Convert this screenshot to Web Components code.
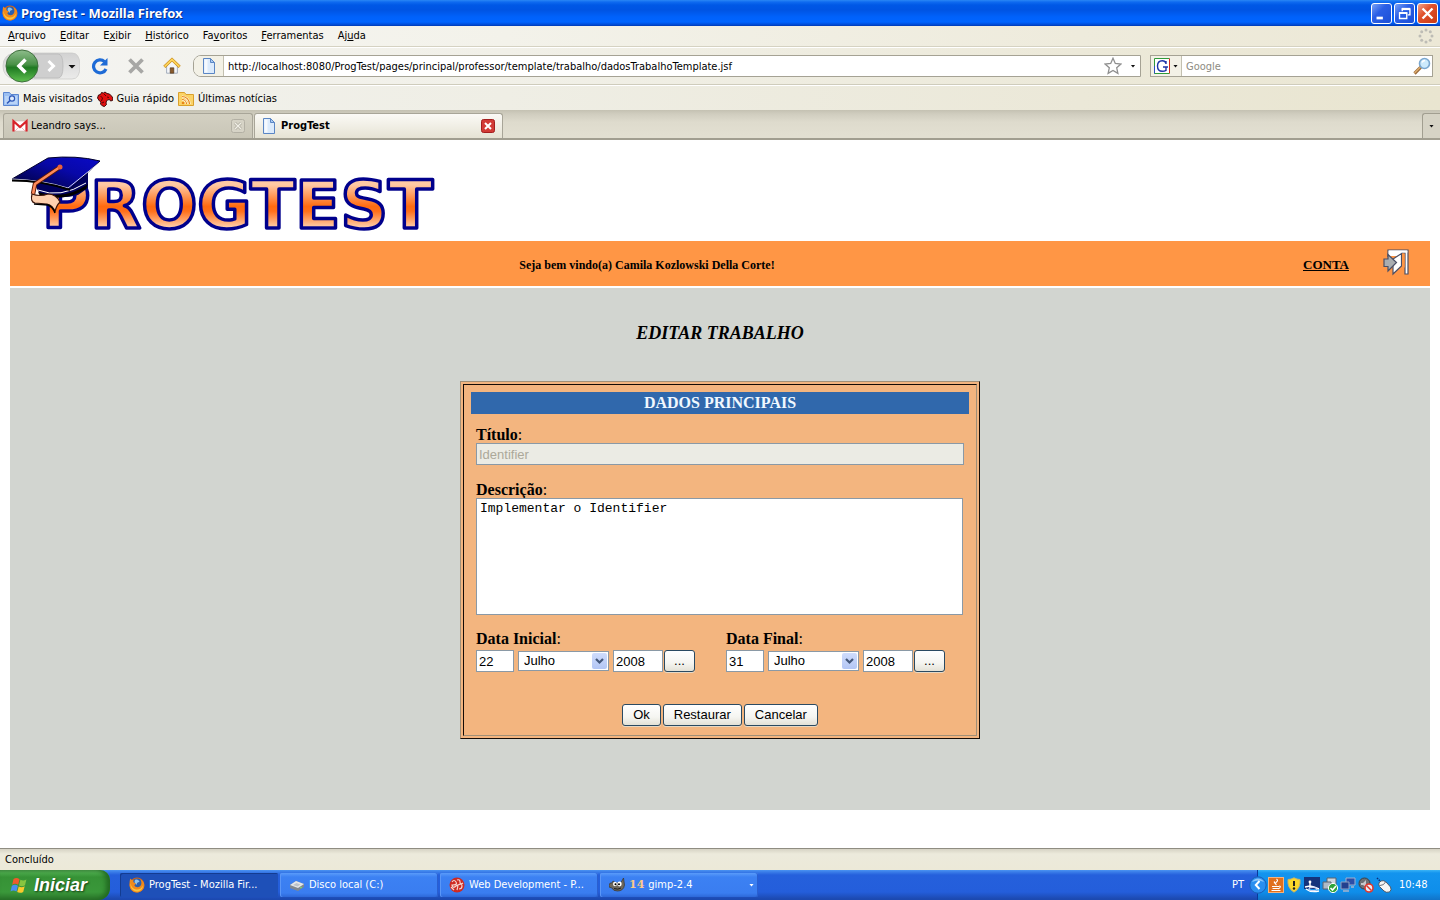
<!DOCTYPE html>
<html lang="pt-BR">
<head>
<meta charset="utf-8">
<title>ProgTest - Mozilla Firefox</title>
<style>
  html, body { margin: 0; height: 100%; }
  body {
    --ui: "DejaVu Sans Condensed", "DejaVu Sans", sans-serif;
    --sans: "Liberation Sans", Arial, sans-serif;
    --serif: "Liberation Serif", "Times New Roman", serif;
    --mono: "Liberation Mono", "Courier New", monospace;
    font: 11px/14px var(--ui);
    color: #000; background: #fff;
  }
</style>
</head>
<body>
<desktop-shell>
  <xp-titlebar>ProgTest - Mozilla Firefox</xp-titlebar>
  <ff-menubar></ff-menubar>
  <ff-navbar></ff-navbar>
  <ff-bookmarks></ff-bookmarks>
  <ff-tabstrip>
    <ff-tab icon="gmail">Leandro says...</ff-tab>
    <ff-tab icon="page" active>ProgTest</ff-tab>
  </ff-tabstrip>
  <pt-page slot="content">
    <pt-logo></pt-logo>
    <pt-welcome user="Camila Kozlowski Della Corte"></pt-welcome>
    <pt-main heading="EDITAR TRABALHO">
      <pt-workform></pt-workform>
    </pt-main>
  </pt-page>
  <ff-statusbar slot="footer">Concluído</ff-statusbar>
  <xp-taskbar slot="footer">
    <xp-task icon="firefox" active>ProgTest - Mozilla Fir...</xp-task>
    <xp-task icon="disk">Disco local (C:)</xp-task>
    <xp-task icon="web">Web Development - P...</xp-task>
    <xp-task icon="gimp" count="14">gimp-2.4</xp-task>
  </xp-taskbar>
</desktop-shell>

<script>
const define = (name, render) => customElements.define(name, class extends HTMLElement {
  connectedCallback() {
    if (this.shadowRoot) return;
    this.attachShadow({ mode: 'open' }).innerHTML =
      '<style>:host,*{box-sizing:border-box}button,input,select,textarea{font:inherit;color:inherit;margin:0}</style>' + render(this);
  }
});

/* ---------- icons ---------- */
const ICONS = {
  firefox: ['0 0 16 16', `<circle cx="8" cy="8" r="7.4" fill="#d9640f"/><circle cx="8.2" cy="6.4" r="5" fill="#2b5fae"/><path d="M6 3c2-1 4 0 4.500 2-2 0-3 1-2.500 2.500C6 7.500 5 5 6 3z" fill="#8cc4ef"/><path d="M1.200 1.500C2 2.600 3 3 4.500 3.200 4 5 4.600 6 7 6.200c0 1-1.500 1-1.600 2 .5 2 3.600 2.600 5.400 1.200C13 8 12.800 4.500 11 2c3 1.200 4.600 4 4.300 7-.5 4-4 6.500-7.600 6.500C3 15.300.2 11 .5 7 .6 5 .8 3 1.200 1.500z" fill="#f08a1c"/><path d="M1.500 6c.5 3 2 6 6 6.500 3 .2 5.500-1.500 6.300-4 .3 3.500-2.500 6-6 6C4 14.400 1 11 1.500 6z" fill="#f9c440"/>`],
  gmail: ['0 0 16 16', `<path d="M1 3h14v10H1z" fill="#fff" stroke="#d8b0b0" stroke-width=".6"/><path d="M1.500 13.500V3.200L8 9l6.500-5.800v10.300" fill="none" stroke="#d8232a" stroke-width="2.200"/><path d="M3 13l4-4M13 13L9 9" stroke="#e6a7a7" stroke-width=".8"/>`],
  page: ['0 0 16 16', `<path d="M2.500.5h7l4 4v11h-11z" fill="#dcebfc" stroke="#5b86c4"/><path d="M3.500 1.500h3v13h-3z" fill="#fff" opacity=".7"/><path d="M9.500.5v4h4z" fill="#a9cbf3" stroke="#5b86c4"/>`],
  closeTab: ['0 0 14 14', `<rect x=".5" y=".5" width="13" height="13" rx="2" fill="#d23b36" stroke="#a31f1f"/><path d="M4 4l6 6M10 4l-6 6" stroke="#fff" stroke-width="2"/>`],
  closeTabOff: ['0 0 14 14', `<rect x=".5" y=".5" width="13" height="13" rx="2" fill="#d6d3c6" stroke="#b3b0a4"/><path d="M4 4l6 6M10 4l-6 6" stroke="#aaa79b" stroke-width="2.600"/><path d="M4 4l6 6M10 4l-6 6" stroke="#f1efe6" stroke-width="1.400"/>`],
  min: ['0 0 21 21', `<rect x="5" y="14" width="7" height="3" fill="#fff"/>`],
  restore: ['0 0 21 21', `<path d="M8 8V5.500h8.500V12H14" fill="none" stroke="#fff" stroke-width="1.500"/><path d="M7.500 5.500h9" stroke="#fff" stroke-width="2.500"/><path d="M5 10h8v6H5z" fill="none" stroke="#fff" stroke-width="1.500"/><path d="M4.500 10h9" stroke="#fff" stroke-width="2"/>`],
  close: ['0 0 21 21', `<path d="M5 5l11 11M16 5L5 16" stroke="#fff" stroke-width="2.600"/>`],
  throbber: ['0 0 16 16', `<g fill="#bdbcb5"><circle cx="8" cy="2" r="1.500"/><circle cx="12.300" cy="3.700" r="1.500"/><circle cx="14" cy="8" r="1.500"/><circle cx="12.300" cy="12.300" r="1.500"/><circle cx="8" cy="14" r="1.500"/><circle cx="3.700" cy="12.300" r="1.500"/><circle cx="2" cy="8" r="1.500"/><circle cx="3.700" cy="3.700" r="1.500"/></g>`],
  navgroup: ['0 0 80 34', `<defs><linearGradient id="g" x2="0" y2="1"><stop stop-color="#8fbd8c"/><stop offset=".45" stop-color="#4a9148"/><stop offset=".55" stop-color="#1f7a22"/><stop offset="1" stop-color="#5fc04f"/></linearGradient><linearGradient id="h" x2="0" y2="1"><stop stop-color="#d2d2d2"/><stop offset="1" stop-color="#ebebea"/></linearGradient></defs><path d="M14 4h58q8 0 8 13t-8 13H14Q3 28 3 17T14 4z" fill="url(#h)" stroke="#c9c9c7" stroke-width=".7"/><path d="M34 5h24q5 0 5 12t-5 12H34z" fill="#cfcfcf" stroke="#b9b9b9" stroke-width=".8"/><circle cx="22" cy="17" r="16" fill="url(#g)" stroke="#3f6f3d"/><path d="M25.500 10.500L19 17l6.500 6.500" fill="none" stroke="#fff" stroke-width="3.600"/><path d="M48.500 12l5 5-5 5" fill="none" stroke="#fff" stroke-width="3"/><path d="M68.500 16h7l-3.500 3.500z" fill="#111"/>`],
  reload: ['0 0 18 18', `<path d="M13.500 4.600A6.500 6.500 0 1 0 15 12" fill="none" stroke="#1e6bd6" stroke-width="3.200"/><path d="M16.500 1v7.500H9z" fill="#1e6bd6"/>`],
  stop: ['0 0 18 18', `<path d="M2.500 2.500l13 13M15.500 2.500l-13 13" stroke="#a7a7a5" stroke-width="3.800"/>`],
  home: ['0 0 20 18', `<path d="M4 9l6-6 6 6v8H4z" fill="#f4f6fa" stroke="#8794a8" stroke-width=".8"/><path d="M8 11h4v6H8z" fill="#8a5a2c" stroke="#473016" stroke-width=".7"/><path d="M1.500 10L10 1.800 18.500 10" fill="none" stroke="#c98a18" stroke-width="3.400"/><path d="M1.800 9.700L10 1.900l8.200 7.800" fill="none" stroke="#fcd45c" stroke-width="2"/>`],
  star: ['0 0 18 18', `<path d="M9 1.200l2.300 5.200 5.600.6-4.200 3.800 1.200 5.600L9 13.500l-4.900 2.900 1.200-5.600L1.100 7l5.600-.6z" fill="#fff" stroke="#8f8f8f" stroke-width="1.300"/>`],
  google: ['0 0 16 16', `<path d="M.5.500h15v15H.5z" fill="#fff"/><path d="M.5 15.500V.5h15" fill="none" stroke="#2f9a3a"/><path d="M15.500.5v15" stroke="#d02a20"/><path d="M.5 15.500h15" stroke="#2f9a3a"/><path d="M.5 8v7.500" stroke="#2a4fc0"/><path d="M12 6V3M12 5.500C11.500 3.500 10 2.700 8.200 2.700 5.300 2.700 3.500 5 3.500 8s1.800 5.300 4.800 5.300c1.500 0 2.800-.4 3.700-1V9M9 9h5" fill="none" stroke="#1d34a8" stroke-width="1.400"/>`],
  lens: ['0 0 18 18', `<path d="M1.500 16.500l6.300-6.300" stroke="#9b6a3b" stroke-width="3.200"/><path d="M1.500 16l6-6" stroke="#e0b070" stroke-width="1.300"/><circle cx="11.500" cy="6.500" r="5" fill="#cdeafc" stroke="#7aa7cf" stroke-width="1.600"/><path d="M9 5.500q1-2 3-2" fill="none" stroke="#fff" stroke-width="1.500"/>`],
  folderFind: ['0 0 16 16', `<path d="M.5 1.500h6l1.500 2h7.500v11H.5z" fill="#9cc0f2" stroke="#5b86d0"/><path d="M2 5h12v8H2z" fill="#b9d4f8"/><circle cx="9" cy="7.500" r="2.600" fill="#e0ecfc" stroke="#2e58b8" stroke-width="1.200"/><path d="M7 9.500L4 12.500" stroke="#2e58b8" stroke-width="1.600"/>`],
  dino: ['0 0 16 16', `<path d="M.5 7l1-3 2-.5 1-2 2 .5 1.500-1 2 1.500 2.500.5 2 2 1.500 2-.5 2.500-2 .5-1-1.500-2 .5-1 1-.5 2 .5 1.500-2 2-2-.5-2-2 .5-2-1.500-1z" fill="#e01010" stroke="#2a0303" stroke-width=".9"/><path d="M3.500 5l2 2-1 3M7 3l2 2M10 6l2 .5M5 12l2-1" stroke="#5a0404" fill="none"/>`],
  rssFolder: ['0 0 16 16', `<path d="M.5 1.500h6l1.500 2h7.500v11H.5z" fill="#fbd367" stroke="#d9a02c"/><circle cx="5" cy="12" r="1.300" fill="#e8861a"/><path d="M4 8.500a4.500 4.500 0 0 1 4.500 4.500M4 5.500a7.500 7.500 0 0 1 7.500 7.500" fill="none" stroke="#fff" stroke-width="2.200"/><path d="M4 8.500a4.500 4.500 0 0 1 4.500 4.500M4 5.500a7.500 7.500 0 0 1 7.500 7.500" fill="none" stroke="#e8861a" stroke-width="1.200"/>`],
  door: ['0 0 28 28', `<path d="M5 9V2h20v24h-3V5h-4" fill="#fff" stroke="#4a4f66" stroke-width="1.200"/><path d="M5.600 2.600h18.800v2H19V8H5.600z" fill="#fff"/><path d="M18.500 5.500V18L10 26V11z" fill="#fff" stroke="#4a4f66" stroke-width="1.200"/><path d="M19.200 5.500h2.500v14h-2.500z" fill="#ff9645"/><path d="M1 11h4V6.500l8.500 8L5 23v-4.500H1z" fill="#a9adb0" stroke="#4a4f66" stroke-width="1.200"/>`],
  flag: ['0 0 20 18', `<path d="M4.500 2.500q3-2 6 .2L9.200 8.300q-3-2-6 0z" fill="#ef5a2c"/><path d="M11.400 3.300q3 1.600 6-.3L16 8.700q-3 1.800-6 .2z" fill="#87c540"/><path d="M2.900 9.300q3-2 6 0L7.500 15q-3-2-6-.1z" fill="#4a8ef0"/><path d="M9.700 9.900q3 1.700 6-.2l-1.500 5.700q-3 1.800-6 .2z" fill="#fbc92d"/>`],
  disk: ['0 0 16 16', `<path d="M1 8l6-4 8 3v3l-6 4-8-3z" fill="#7f8791"/><path d="M1 8l6-4 8 3-6 4z" fill="#e3e6ea"/><path d="M4 8l3.500-2 4 1.500-3 2z" fill="#bcc2ca"/><circle cx="12" cy="10.500" r=".8" fill="#6ff06a"/>`],
  web: ['0 0 16 16', `<circle cx="8" cy="8" r="7.500" fill="#cf2a22"/><path d="M3 5q2-3 4 0T3 8q1 4 4 1t1 4M8 3q3-1 3 2t3 1M9 8q4-2 4 1t-3 3M2 10l3 3" fill="none" stroke="#f5d5d0" stroke-width="1.200"/>`],
  gimp: ['0 0 16 16', `<path d="M0 8Q1 5 3 6l1-2 3 2 5-.5L14.500 1l1 7q-1 6-7 6Q4 14 3 11L0 10z" fill="#6d675c" stroke="#37342e" stroke-width=".7"/><ellipse cx="6" cy="7" rx="2" ry="2.200" fill="#fff"/><ellipse cx="10.500" cy="7" rx="2.200" ry="2.400" fill="#fff"/><circle cx="6.500" cy="7.300" r="1"/><circle cx="10" cy="7.300" r="1"/><path d="M5 11.500q4 1.500 7-.5" stroke="#201e1a" fill="none"/>`],
  java: ['0 0 16 16', `<rect x=".5" y=".5" width="15" height="15" fill="#e0701c" stroke="#f6b27c"/><path d="M8.500 2q2 1.500 0 3t0 3M6 4.500q1 1 .3 2" fill="none" stroke="#fff" stroke-width="1.100"/><path d="M4 9.500h7M4.500 11.500h6M11 9q2 0 1 1.500t-2 1M3.500 13.500h9" fill="none" stroke="#fff" stroke-width="1.100"/>`],
  shield: ['0 0 16 16', `<path d="M8 .8q3 1.700 6 1.700 1 8.500-6 12.700Q1 11 2 2.500 5 2.500 8 .8z" fill="#fbd82a" stroke="#c9b26a"/><path d="M8 4v5" stroke="#222" stroke-width="2"/><circle cx="8" cy="11.500" r="1.200" fill="#222"/>`],
  wifi: ['0 0 16 16', `<path d="M0 0h16v12H0z" fill="#14337c"/><circle cx="6" cy="5" r="1.400" fill="#fff"/><path d="M6 5v6M1 10l5-1 4 1 5 2M2 12q5 4 13 2" fill="none" stroke="#fff" stroke-width="1.400"/><ellipse cx="9" cy="12" rx="4" ry="1.600" fill="none" stroke="#c9d6f5" stroke-width="1.100"/>`],
  safe: ['0 0 16 16', `<path d="M5 1h9v7H5z" fill="#cfd6de" stroke="#59636e"/><path d="M1 5h8v7H1z" fill="#aebac6" stroke="#59636e"/><circle cx="11" cy="11" r="4.600" fill="#2fa43a" stroke="#fff"/><path d="M8.500 11l2 2 3.500-4" fill="none" stroke="#fff" stroke-width="1.600"/>`],
  net: ['0 0 16 16', `<path d="M6 1h9v7H6z" fill="#2c4ea8" stroke="#9fb0cf"/><path d="M1 5h8v7H1z" fill="#22408f" stroke="#8ea0c2"/><path d="M3 14h6M11 10h3" stroke="#a8b4cc" stroke-width="1.600"/>`],
  mute: ['0 0 16 16', `<circle cx="6.500" cy="6.500" r="5.500" fill="#6d7075" stroke="#3c3e42"/><path d="M3 6h2l3-3v7L5 8H3z" fill="#c5c8cc"/><circle cx="11" cy="11" r="4" fill="#e8edf5" stroke="#e0372c" stroke-width="1.600"/><path d="M8.500 8.500l5 5" stroke="#e0372c" stroke-width="1.500"/>`],
  mouse: ['0 0 16 16', `<path d="M1 1l4 4" stroke="#0b2c7a" stroke-width="1.500" stroke-dasharray="1.500 1"/><path d="M3.500 5q4-3 7.500 1l3.500 4q1.500 3-1 5-3.500 1-5.500-1L3.500 9.500Q2 7 3.500 5z" fill="#f6f6f4" stroke="#4c4f58" stroke-width=".9"/><path d="M4 8.500Q8 8.500 9.500 5" fill="none" stroke="#6c6f78"/>`],
  collapse: ['0 0 18 18', `<circle cx="9" cy="9" r="8.200" fill="#2a8ff0" stroke="#1a5fb8"/><path d="M3 6a7 7 0 0 1 12 0q-6-3-12 0z" fill="#8cc6fa"/><path d="M10.500 5L6.800 9l3.700 4" fill="none" stroke="#fff" stroke-width="2"/>`]
};
define('ui-icon', el => {
  const [box, body] = ICONS[el.getAttribute('name')];
  return `<style>:host{display:block;flex:none;width:16px;height:16px}svg{display:block;width:100%;height:100%}</style>
    <svg viewBox="${box}" aria-hidden="true">${body}</svg>`;
});

/* ---------- window shell ---------- */
define('desktop-shell', () => `
  <style>
    :host{display:flex;flex-direction:column;min-height:100vh}
    main{flex:1;min-height:0}
  </style>
  <slot></slot><main><slot name="content"></slot></main><slot name="footer"></slot>`);

define('xp-titlebar', () => `
  <style>
    :host{display:flex;align-items:center;height:26px;padding:0 2px;gap:2px;
      background:linear-gradient(#2a87f5 0,#0f6bf0 2px,#0058e6 5px,#0054e3 10px,#0062fb 17px,#0064ff 22px,#0048d0 25px,#0038b0);
      color:#fff}
    h1{flex:1;margin:0;padding-left:1px;font:700 13px/18px "Noto Sans","Open Sans",sans-serif;text-shadow:1px 1px #0a2f86}
    button{width:21px;height:21px;padding:0;border:1px solid #fff;border-radius:3px;
      background:linear-gradient(135deg,#7aa2f6,#2a5fe6 40%,#1c4fd6)}
    .close{background:linear-gradient(135deg,#f0a48c,#e0512c 40%,#c83a14)}
    ui-icon{width:19px;height:19px}
    .logo{width:16px;height:16px}
  </style>
  <ui-icon class="logo" name="firefox"></ui-icon>
  <h1><slot></slot></h1>
  <button aria-label="Minimizar"><ui-icon name="min"></ui-icon></button>
  <button aria-label="Restaurar"><ui-icon name="restore"></ui-icon></button>
  <button class="close" aria-label="Fechar"><ui-icon name="close"></ui-icon></button>`);

define('ff-menubar', () => `
  <style>
    :host{display:flex;align-items:center;height:21px;padding:0 6px 0 8px;
      background:linear-gradient(90deg,#f6f6f3,#f3f2ea 35%,#eeebdc 75%,#ece8d6);
      border-bottom:1px solid #d5d2c2}
    nav{flex:1;display:flex;gap:14px}
    a{color:#000;text-decoration:none}
  </style>
  <nav>
    <a href="#"><u>A</u>rquivo</a><a href="#"><u>E</u>ditar</a><a href="#">E<u>x</u>ibir</a>
    <a href="#"><u>H</u>istórico</a><a href="#">Fa<u>v</u>oritos</a><a href="#"><u>F</u>erramentas</a><a href="#">Aj<u>u</u>da</a>
  </nav>
  <ui-icon name="throbber"></ui-icon>`);

define('ff-navbar', () => `
  <style>
    :host{display:flex;align-items:center;height:38px;padding:0 7px 0 0;
      background:linear-gradient(90deg,#f4f4f1,#f1f0e8 35%,#ece9d9 75%,#eae6d3);
      border-top:1px solid #fff;border-bottom:1px solid #cfccbc}
    button{padding:0;border:0;background:none}
    .group{width:80px;height:34px}
    .tools{display:flex;gap:18px;margin:0 12px 0 11px}
    .tools ui-icon{width:18px;height:18px}
    .field{display:flex;align-items:center;height:22px;background:#fff;border:1px solid #a5a294}
    .url{flex:1;border-radius:8px 0 0 8px;overflow:hidden}
    .lead{display:flex;align-items:center;justify-content:center;align-self:stretch;background:#f3f1e6;border-right:1px solid #c3c0b0}
    .url .lead{width:30px}
    .search .lead{width:31px;gap:3px}
    input{border:0;padding:0 4px;outline:0;background:none;min-width:0;flex:1;height:20px}
    input::placeholder{color:#8d8b82;opacity:1}
    .search{width:283px;margin-left:9px;padding-right:1px}
    .down{width:5px;height:3px;background:#111;clip-path:polygon(0 0,100% 0,50% 100%)}
    .star,.lens{width:18px;height:18px}
    .star{margin-right:4px}
    .drop{width:14px;height:20px;display:grid;place-items:center}
  </style>
  <button aria-label="Voltar e avançar"><ui-icon class="group" name="navgroup"></ui-icon></button>
  <div class="tools">
    <button aria-label="Recarregar"><ui-icon name="reload"></ui-icon></button>
    <button aria-label="Parar"><ui-icon name="stop"></ui-icon></button>
    <button aria-label="Início"><ui-icon name="home"></ui-icon></button>
  </div>
  <div class="field url">
    <span class="lead"><ui-icon name="page"></ui-icon></span>
    <input aria-label="Endereço" value="http://localhost:8080/ProgTest/pages/principal/professor/template/trabalho/dadosTrabalhoTemplate.jsf">
    <ui-icon class="star" name="star"></ui-icon>
    <button class="drop" aria-label="Histórico de endereços"><i class="down"></i></button>
  </div>
  <div class="field search">
    <span class="lead"><ui-icon name="google"></ui-icon><i class="down"></i></span>
    <input aria-label="Pesquisar" placeholder="Google">
    <ui-icon class="lens" name="lens"></ui-icon>
  </div>`);

define('ff-bookmarks', () => `
  <style>
    :host{display:flex;align-items:center;height:25px;padding:2px 3px 0;gap:4px;
      background:linear-gradient(90deg,#f2f2ee,#efeee5 35%,#ebe8d8 75%,#e9e5d0);border-top:1px solid #fff}
    a{display:flex;align-items:center;gap:4px;color:#000;text-decoration:none}
  </style>
  <a href="#"><ui-icon name="folderFind"></ui-icon>Mais visitados</a>
  <a href="#"><ui-icon name="dino"></ui-icon>Guia rápido</a>
  <a href="#"><ui-icon name="rssFolder"></ui-icon>Últimas notícias</a>`);

define('ff-tabstrip', () => `
  <style>
    :host{display:flex;align-items:flex-end;height:30px;padding:3px 0 0 3px;
      background:linear-gradient(#c4c1b2,#d0cdbf 4px,#dedbcd 12px,#e2dfd1 25px);
      border-bottom:2px solid #a19e90}
    .tabs{display:flex;gap:1px;flex:1;height:100%}
    button{width:18px;height:100%;border:1px solid #a19e90;border-width:1px 0 0 1px;border-radius:3px 0 0 0;background:#d6d3c5;padding:0;display:grid;place-items:center}
    i{width:5px;height:3px;background:#111;clip-path:polygon(0 0,100% 0,50% 100%)}
  </style>
  <div class="tabs"><slot></slot></div>
  <button aria-label="Listar abas"><i></i></button>`);

define('ff-tab', el => {
  const on = el.hasAttribute('active');
  return `
  <style>
    :host{display:flex;align-items:center;gap:3px;width:250px;padding:0 7px 0 8px;
      border:1px solid #a8a598;border-bottom:0;border-radius:3px 3px 0 0;background:linear-gradient(#d3d0c2,#c9c6b7)}
    :host([active]){font-weight:700;background:linear-gradient(#fbfaf6,#e6e3d4);width:249px;padding-left:6px;gap:4px}
    span{flex:1}
    button{width:14px;height:14px;padding:0;border:0;background:none}
    button ui-icon{width:14px;height:14px}
  </style>
  <ui-icon name="${el.getAttribute('icon')}"></ui-icon><span><slot></slot></span>
  <button aria-label="Fechar aba"><ui-icon name="${on ? 'closeTab' : 'closeTabOff'}"></ui-icon></button>`;
});

define('ff-statusbar', () => `
  <style>
    :host{display:block;height:22px;padding:4px 5px 3px;border-top:1px solid #8f8d82;background:linear-gradient(#d6d3c4,#eceadc 5px,#ece9d8)}
  </style><slot></slot>`);

/* ---------- web page ---------- */
define('pt-page', () => `<style>:host{display:block;padding:16px 10px 38px;font-family:var(--serif)}</style><slot></slot>`);

define('pt-logo', () => `
  <style>:host{display:block;height:85px}svg{display:block;width:430px;height:78px;overflow:visible}
    text{font:700 66px "DejaVu Sans",sans-serif}</style>
  <svg viewBox="0 0 430 78" role="img" aria-label="ProgTest">
    <defs>
      <linearGradient id="t" gradientUnits="userSpaceOnUse" x1="0" y1="24" x2="0" y2="72">
        <stop offset=".1" stop-color="#ffc9a4"/><stop offset=".55" stop-color="#ff6a10"/><stop offset=".65" stop-color="#ff6f1a"/><stop offset="1" stop-color="#ffd2b0"/></linearGradient>
      <linearGradient id="c" x1="0" y1="1" x2="1" y2="0"><stop stop-color="#00002e"/><stop offset=".6" stop-color="#0808a8"/><stop offset="1" stop-color="#0a0ac8"/></linearGradient>
    </defs>
    <text x="32" y="72" fill="url(#t)" stroke="#00008c" stroke-width="3.500" stroke-linejoin="round">PROGTEST</text>
    <path d="M23 26l7 12q20 6 38 1l10-7V16z" fill="#00005c"/>
    <path d="M28 36q26 9 50-8l-2 5Q55 46 30 40z" fill="#000"/>
    <path d="M28 34q22 9 48-7" fill="none" stroke="#fff" stroke-width="1"/>
    <path d="M2 23L38 2q28-3 52 3L60 33Q32 24 2 23z" fill="url(#c)" stroke="#00002a"/>
    <path d="M2 23q30 1 56 9L89 7" fill="none" stroke="#e8e8ff" stroke-width=".9"/>
    <path d="M2 24.500q30 0 58 9.500" fill="none" stroke="#000" stroke-width="2"/>
    <path d="M50 11L25 28l-2 10" fill="none" stroke="#5a1a08" stroke-width="4.500" stroke-linejoin="round"/>
    <path d="M50 11L25 28l-2 10" fill="none" stroke="#ff8a5a" stroke-width="2.600" stroke-linejoin="round"/>
    <circle cx="50" cy="11" r="2.500" fill="#e8603a"/>
    <path d="M22 38q-2 8 3 9l12 1q6 1 8 8 1-6 5-10-4-8-12-8-8 3-16 0z" fill="#ffd0ae" stroke="#3c1408" stroke-width="1.200"/>
    <path d="M24 48l14 1q5 2 7 8" fill="none" stroke="#000" stroke-width="1.500"/>
  </svg>`);

define('pt-welcome', el => `
  <style>
    :host{display:flex;align-items:center;height:45px;background:#ff9645;font-size:13px;line-height:16px;font-weight:700;margin-bottom:2px}
    p{flex:1;margin:0;text-align:center;padding-top:2px;font-size:12px}
    nav{display:flex;align-items:center;gap:34px;width:146px;padding-left:19px}
    a{color:#000}
    .conta{padding-top:2px}
    .exit{padding-bottom:4px}
    ui-icon{width:28px;height:28px}
  </style>
  <p>Seja bem vindo(a) ${el.getAttribute('user')}!</p>
  <nav><a class="conta" href="#">CONTA</a><a class="exit" href="#" aria-label="Sair"><ui-icon name="door"></ui-icon></a></nav>`);

define('pt-main', el => `
  <style>
    :host{display:flex;flex-direction:column;align-items:center;background:#d2d5d0;padding:35px 0 71px}
    h2{margin:0 0 38px;font:italic 700 18px/20px var(--serif)}
  </style><h2>${el.getAttribute('heading')}</h2><slot></slot>`);

define('xp-button', () => `
  <style>
    :host{display:inline-block}
    button{display:block;height:22px;padding:0 10px;font:13px/18px var(--sans);border:1px solid #2a4a62;border-radius:3px;
      background:linear-gradient(#fff,#f5f5f1 60%,#e3e1d6);box-shadow:0 1px #e6d8c4}
    :host([wide]) button{width:31px;padding:0}
  </style><button type="button"><slot></slot></button>`);

define('pt-date', el => `
  <style>
    :host{display:block;flex:none;width:250px}
    label{display:block;padding-top:2px;font:16px/18px var(--serif)} b{font-weight:700}
    .row{display:flex;align-items:center;margin-top:2px;font:13px/18px var(--sans)}
    input,.sel{height:22px;border:1px solid #8a99a6;background:#fff}
    input{padding:0 2px;border-radius:0}
    .day{width:38px;margin-right:4px}.year{width:50px;margin:0 1px 0 4px}
    .sel{position:relative;width:91px;height:20px}
    select{display:block;appearance:none;width:100%;height:18px;border:0;padding:0 5px;background:none}
    .arrow{position:absolute;right:1px;top:1px;width:15px;height:16px;pointer-events:none;background:linear-gradient(#cfdcfc,#b3c6f5);border-radius:2px}
    svg{display:block;width:15px;height:16px}
  </style>
  <label for="day"><b>${el.getAttribute('label')}</b>:</label>
  <div class="row">
    <input id="day" class="day" value="${el.getAttribute('day')}">
    <span class="sel"><select aria-label="Mês"><option>Julho</option></select>
      <span class="arrow"><svg viewBox="0 0 15 16" aria-hidden="true"><path d="M4 6l3.500 3.500L11 6" fill="none" stroke="#44587c" stroke-width="2.200"/></svg></span></span>
    <input class="year" aria-label="Ano" value="2008">
    <xp-button wide>...</xp-button>
  </div>`);

define('pt-workform', () => `
  <style>
    :host{display:block;width:520px;padding:2px;background:#f3b57f;border:1px solid;border-color:#a09078 #140c06 #140c06 #a09078}
    form{border:1px solid;border-color:#140c06 #a09078 #a09078 #140c06;padding:7px 7px 9px;margin:0}
    h3{margin:0;font:700 16px/22px var(--serif);text-align:center;color:#f0f8ff;background:#3068ac}
    .body{padding:11px 5px 0;display:flex;flex-direction:column}
    label{padding-top:2px;font:16px/16px var(--serif)} b{font-weight:700}
    #titulo{height:22px;margin-bottom:15px;padding:0 2px;border:1px solid #8a99a6;background:#ebebe4;color:#aca899;font:13px/18px var(--sans)}
    #desc{height:117px;margin:0 1px 13px 0;padding:2px 3px;border:1px solid #8a99a6;background:#fff;resize:none;font:13px/16px var(--mono)}
    .dates{display:flex}
    .actions{display:flex;justify-content:center;gap:2px;margin-top:32px}
  </style>
  <form>
    <h3>DADOS PRINCIPAIS</h3>
    <div class="body">
      <label for="titulo"><b>Título</b>:</label>
      <input id="titulo" value="Identifier" disabled>
      <label for="desc"><b>Descrição</b>:</label>
      <textarea id="desc">Implementar o Identifier</textarea>
      <div class="dates">
        <pt-date label="Data Inicial" day="22"></pt-date>
        <pt-date label="Data Final" day="31"></pt-date>
      </div>
      <div class="actions"><xp-button>Ok</xp-button><xp-button>Restaurar</xp-button><xp-button>Cancelar</xp-button></div>
    </div>
  </form>`);

/* ---------- taskbar ---------- */
define('xp-taskbar', () => `
  <style>
    :host{display:flex;height:30px;color:#fff;background:linear-gradient(#4a93f2 0,#3a7ce8 2px,#2560dc 5px,#245edb 22px,#1c49b0 29px)}
    .start{display:flex;align-items:center;gap:5px;width:110px;padding:0 0 0 9px;border:0;border-radius:0 10px 12px 0;color:#fff;
      background:linear-gradient(#5aa95a 0,#4cab4c 3px,#369236 7px,#3a983a 22px,#2a732a);box-shadow:inset -4px 0 5px #226a22;
      font:italic 700 18px/24px var(--sans);text-shadow:1px 1px 2px #143c14}
    .start ui-icon{width:20px;height:19px}
    .tasks{flex:1;display:flex;gap:2px;padding:3px 0 3px 10px}
    .lang{align-self:center;margin-right:14px}
    .tray{display:flex;align-items:center;width:182px;background:linear-gradient(#3ab4f6 0,#1394ee 3px,#0f8eea 22px,#1173c8);box-shadow:-1px 0 #0b3a9a}
    .tray ui-icon{margin-right:2px}
    .tray ui-icon.c{width:18px;height:18px;margin:0 1px 0 -9px;position:relative}
    time{margin-left:5px}
  </style>
  <button class="start"><ui-icon name="flag"></ui-icon>Iniciar</button>
  <div class="tasks"><slot></slot></div>
  <span class="lang">PT</span>
  <div class="tray"><ui-icon class="c" name="collapse"></ui-icon><ui-icon name="java"></ui-icon><ui-icon name="shield"></ui-icon><ui-icon name="wifi"></ui-icon><ui-icon name="safe"></ui-icon><ui-icon name="net"></ui-icon><ui-icon name="mute"></ui-icon><ui-icon name="mouse"></ui-icon><time>10:48</time></div>`);

define('xp-task', el => {
  const n = el.getAttribute('count');
  return `
  <style>
    :host{display:block;width:158px}
    button{display:flex;align-items:center;gap:4px;width:100%;height:24px;padding:0 4px 0 9px;border:0;border-radius:2px;color:#fff;text-align:left;
      background:linear-gradient(#5a9bfa,#3c81f3 4px,#3a7df0 20px,#2d68d8);box-shadow:inset 1px 0 #5b97f7,inset -1px 0 #2a5fd0}
    :host([active]) button{background:#1e50b8;box-shadow:inset 1px 1px #143c90}
    b{font:700 11px/14px "DejaVu Serif",serif;color:#fbc98a}
    span{flex:1;white-space:nowrap}
    i{width:5px;height:3px;background:#fff;clip-path:polygon(0 0,100% 0,50% 100%)}
  </style>
  <button><ui-icon name="${el.getAttribute('icon')}"></ui-icon>${n ? `<b>${n}</b>` : ''}<span><slot></slot></span>${n ? '<i></i>' : ''}</button>`;
});
</script>
</body>
</html>
